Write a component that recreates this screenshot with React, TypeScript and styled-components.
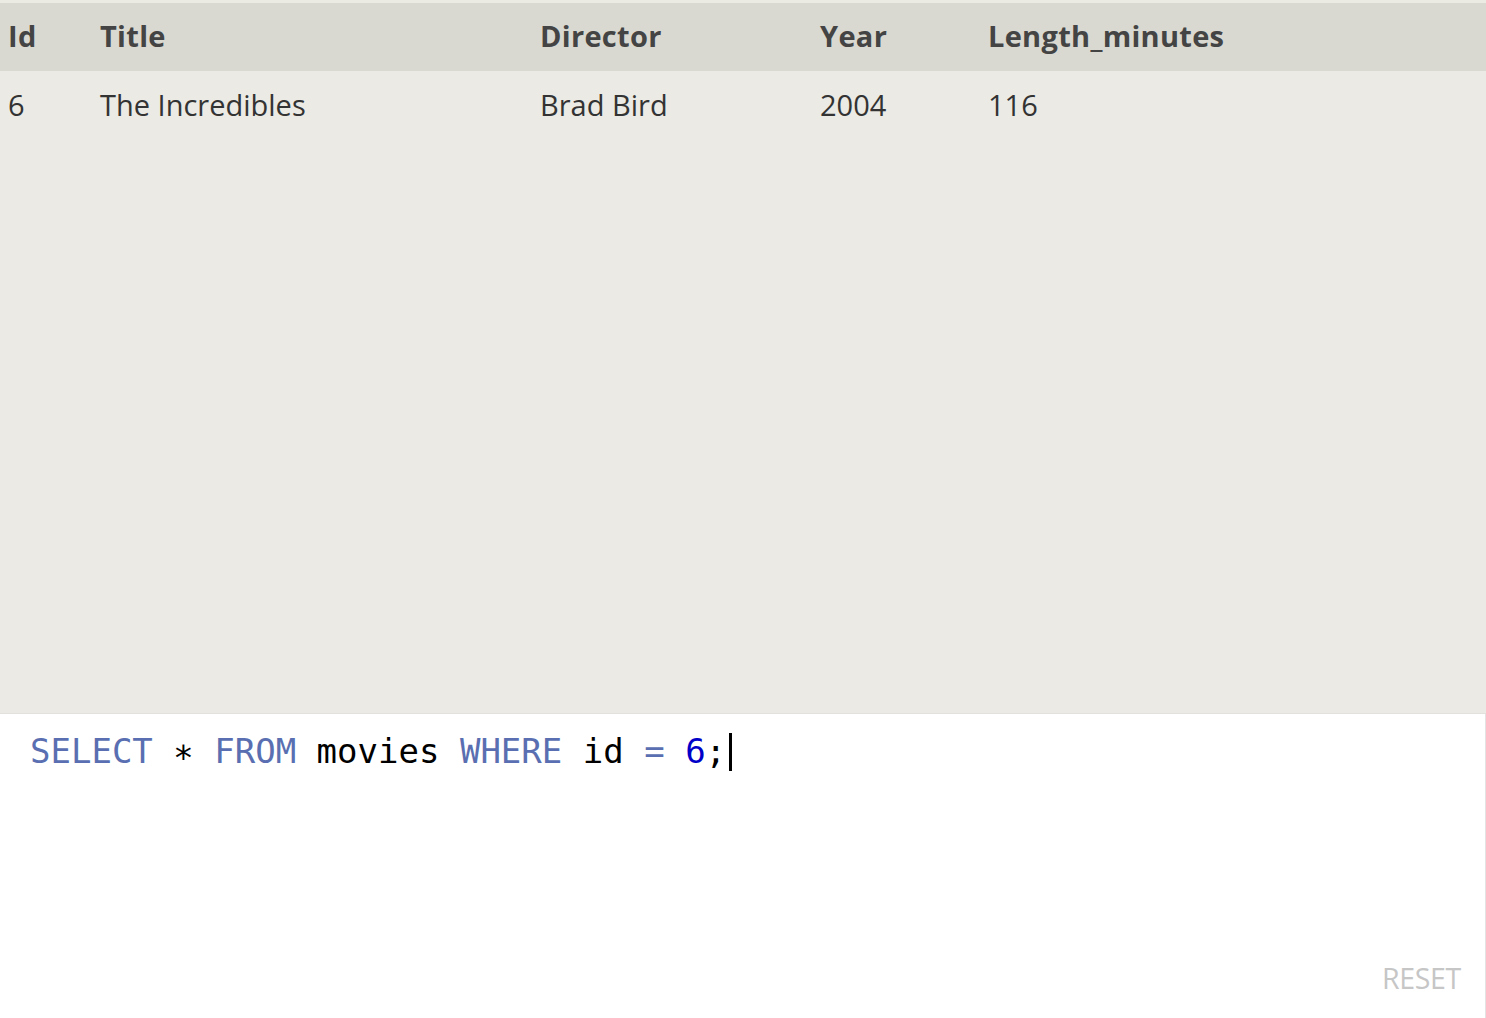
import React from "react";
import styled, { createGlobalStyle } from "styled-components";

const Global = createGlobalStyle`
  html, body { margin: 0; padding: 0; background: #ffffff; }
  body { font-family: "Open Sans", "DejaVu Sans", sans-serif; }
`;

const Page = styled.div`
  width: 1486px;
  height: 1018px;
  display: flex;
  flex-direction: column;
  overflow: hidden;
`;

const Results = styled.div`
  height: 713px;
  background: #ebeae4;
  border-bottom: 1px solid #e2e1db;
  display: flex;
  flex-direction: column;
`;

const TopStrip = styled.div`
  height: 3px;
  background: #ebeae3;
  box-shadow: 0 1px 3px rgba(0, 0, 0, 0.12);
`;

const Grid = styled.div<{ $head?: boolean }>`
  display: grid;
  grid-template-columns: 92px 440px 280px 168px 1fr;
  padding-left: 8px;
  padding-bottom: ${(p) => (p.$head ? "3px" : "0")};
  box-sizing: border-box;
  align-items: center;
  height: ${(p) => (p.$head ? "68px" : "66px")};
  background: ${(p) => (p.$head ? "#dad9d1" : "transparent")};
  color: ${(p) => (p.$head ? "#444444" : "#333333")};
  font-weight: ${(p) => (p.$head ? 700 : 400)};
  font-size: 29px;
  letter-spacing: ${(p) => (p.$head ? "0.3px" : "0")};
`;

const Cell = styled.div`
  white-space: nowrap;
`;

const Editor = styled.div`
  flex: 1;
  position: relative;
  background: #ffffff;
  border-right: 1px solid #e3e3e3;
  padding: 14px 0 0 30px;
`;

const Code = styled.div`
  font-family: "DejaVu Sans Mono", monospace;
  font-size: 34px;
  line-height: 46px;
  color: #000000;
  white-space: pre;
`;

const Kw = styled.span<{ $c?: string }>`
  color: ${(p) => p.$c || "#5a6fb1"};
`;

const Caret = styled.span`
  display: inline-block;
  width: 3px;
  height: 38px;
  background: #000;
  margin-left: 3px;
  vertical-align: -8px;
`;

const Reset = styled.div`
  position: absolute;
  right: 24px;
  bottom: 21px;
  color: #c6c6c6;
  font-size: 28.5px;
  letter-spacing: -0.3px;
`;

const cols = ["Id", "Title", "Director", "Year", "Length_minutes"];
const row = ["6", "The Incredibles", "Brad Bird", "2004", "116"];

export default function App() {
  return (
    <Page>
      <Global />
      <Results>
        <TopStrip />
        <Grid $head>
          {cols.map((c) => (
            <Cell key={c}>{c}</Cell>
          ))}
        </Grid>
        <Grid>
          {row.map((c, i) => (
            <Cell key={i}>{c}</Cell>
          ))}
        </Grid>
      </Results>
      <Editor>
        <Code>
          <Kw>SELECT</Kw>{" ∗ "}<Kw>FROM</Kw>{" movies "}<Kw>WHERE</Kw>{" id "}<Kw>=</Kw>{" "}<Kw $c="#0000c8">6</Kw>;<Caret />
        </Code>
        <Reset>RESET</Reset>
      </Editor>
    </Page>
  );
}
